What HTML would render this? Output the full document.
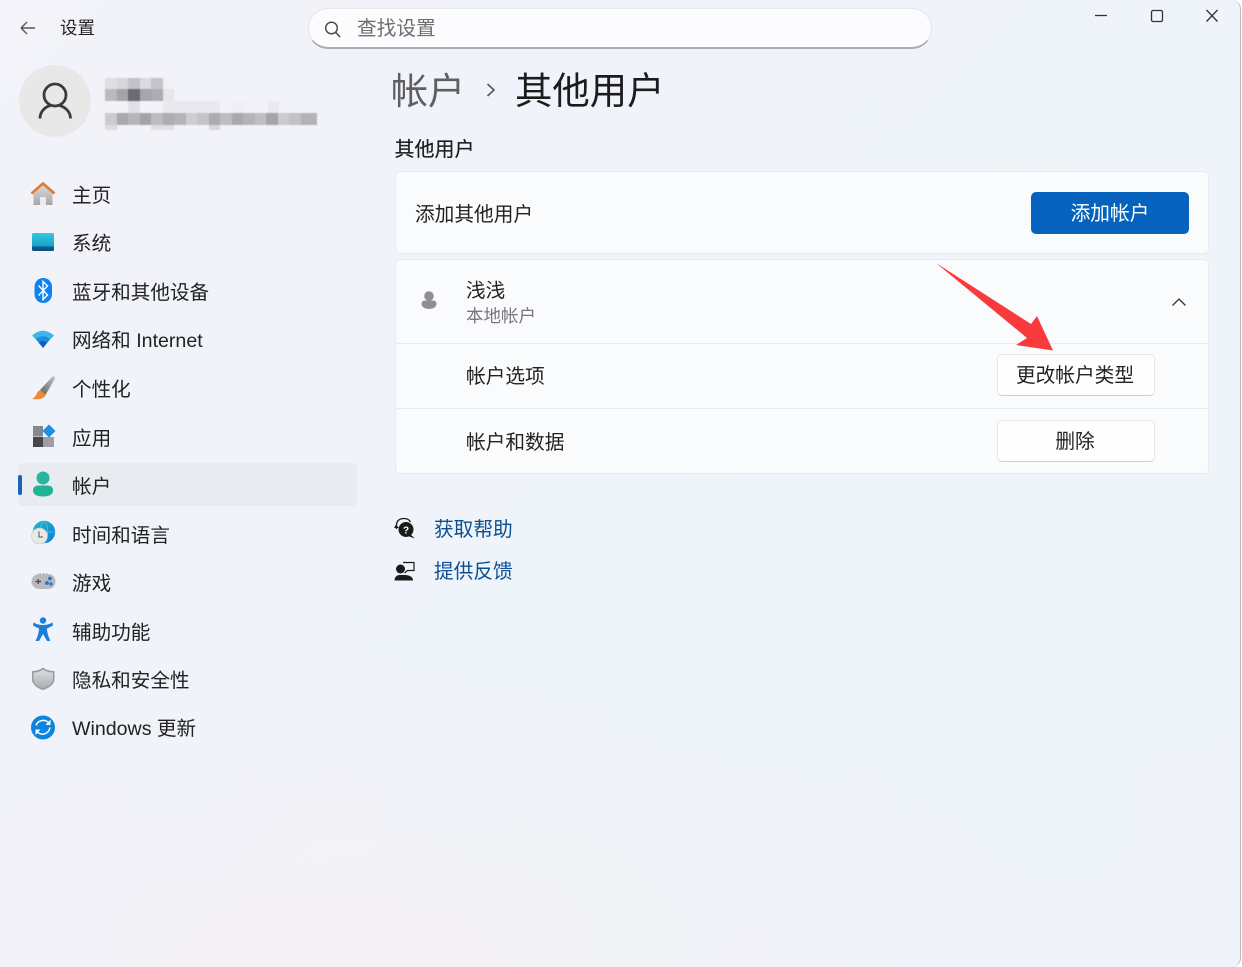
<!DOCTYPE html>
<html lang="zh-CN">
<head>
<meta charset="utf-8">
<title>设置</title>
<style>
html,body{margin:0;padding:0;width:1242px;height:967px;overflow:hidden;background:#fff}
body{font-family:"Liberation Sans","Noto Sans CJK SC",sans-serif;color:#1b1b1b;position:relative}
#win{position:absolute;left:0;top:0;width:1240px;height:967px;border-right:1px solid #b9bbbf;border-radius:0 9px 9px 0;overflow:hidden;
background:radial-gradient(ellipse 700px 300px at 350px 960px,#f5f2f6 0%,rgba(245,242,246,0) 100%),linear-gradient(135deg,#f3f3f9 0%,#f0f3fa 35%,#eef4f9 65%,#f0f3fa 100%)}
.t{position:absolute;white-space:nowrap;line-height:1}
.nav{font-size:19.6px;left:72px;color:#222}
.card{position:absolute;left:395px;width:814px;background:#fafbfd;border:1px solid #e8e9ec;box-sizing:border-box;border-radius:5px}
.sep{position:absolute;left:396px;width:812px;height:1px;background:#ebecef}
.btn{position:absolute;background:#fefefe;border:1px solid #e6e6e8;border-bottom-color:#cfcfd2;box-sizing:border-box;border-radius:5px;width:158px;height:42px;left:997px;padding-right:2px;text-align:center;font-size:19.7px;line-height:42px;color:#222}
svg{position:absolute;overflow:visible}
</style>
</head>
<body>
<div id="win">
  <svg style="left:0;top:0" width="40" height="50"><path d="M21 28H35M21 28L27 22M21 28L27 34" fill="none" stroke="#555" stroke-width="1.4"/></svg>
  <div class="t" style="left:60px;top:20px;font-size:17.5px;color:#222">设置</div>

  <div style="position:absolute;left:308px;top:8px;width:624px;height:41px;box-sizing:border-box;background:#fcfcfe;border:1px solid #e6e7eb;border-bottom:2px solid #a9aaac;border-radius:20px"></div>
  <svg style="left:0;top:0" width="360" height="50"><circle cx="331.500" cy="28" r="5.800" fill="none" stroke="#444" stroke-width="1.400"/><path d="M336 32.500L340 37" stroke="#444" stroke-width="1.500"/></svg>
  <div class="t" style="left:357px;top:20px;font-size:19.700px;color:#6d6d6f">查找设置</div>

  <svg style="left:1080px;top:0" width="160" height="40" fill="none" stroke="#333" stroke-width="1.300">
    <path d="M15 15.500H27"/>
    <rect x="71.500" y="10.500" width="11" height="11" rx="1.500"/>
    <path d="M126.500 10L137.500 21.500M137.500 10L126.500 21.500"/>
  </svg>

  <div style="position:absolute;left:19px;top:65px;width:72px;height:72px;border-radius:50%;background:#e8e8e9"></div>
  <svg style="left:0;top:0" width="100" height="140" fill="none" stroke="#3b3b3d" stroke-width="2.800">
    <circle cx="55" cy="95" r="11"/>
    <path d="M40 118.500C40 111.500 45 107 50.500 105.500M70.500 118.500C70.500 111.500 65 107 59.500 105.500"/>
  </svg>

  <svg style="left:105px;top:78px;filter:blur(.6px)" width="215" height="52" shape-rendering="crispEdges">
    <g>
      <rect x="0" y="0" width="12" height="11" fill="#dedee4"/><rect x="12" y="0" width="11" height="11" fill="#d6d6dc"/><rect x="23" y="0" width="12" height="11" fill="#c1c1c7"/><rect x="35" y="0" width="11" height="11" fill="#d9d9df"/><rect x="46" y="0" width="12" height="11" fill="#c4c4ca"/><rect x="58" y="0" width="11" height="11" fill="#f0f0f5"/>
      <rect x="0" y="11" width="12" height="12" fill="#b9b9be"/><rect x="12" y="11" width="11" height="12" fill="#a4a4aa"/><rect x="23" y="11" width="12" height="12" fill="#6b6b73"/><rect x="35" y="11" width="11" height="12" fill="#a5a5ab"/><rect x="46" y="11" width="12" height="12" fill="#acacb2"/><rect x="58" y="11" width="11" height="12" fill="#e6e6eb"/>
      <rect x="23" y="23" width="12" height="12" fill="#e0e0e6"/><rect x="58" y="23" width="11" height="12" fill="#e9e9ee"/><rect x="69" y="23" width="46" height="12" fill="#e8e8ee"/><rect x="128" y="23" width="11" height="12" fill="#eeeef3"/><rect x="163" y="23" width="11" height="12" fill="#e9e9ee"/>
      <rect x="0" y="35" width="12" height="12" fill="#cacacf"/><rect x="12" y="35" width="11" height="12" fill="#a9a9af"/><rect x="23" y="35" width="12" height="12" fill="#b5b5ba"/><rect x="35" y="35" width="11" height="12" fill="#a3a3a9"/><rect x="46" y="35" width="12" height="12" fill="#bcbcc1"/><rect x="58" y="35" width="11" height="12" fill="#adadb3"/><rect x="69" y="35" width="12" height="12" fill="#b4b4b9"/><rect x="81" y="35" width="11" height="12" fill="#cdcdd2"/><rect x="92" y="35" width="12" height="12" fill="#c3c3c8"/><rect x="104" y="35" width="11" height="12" fill="#abacb1"/><rect x="115" y="35" width="12" height="12" fill="#bdbdc2"/><rect x="127" y="35" width="11" height="12" fill="#a9a9af"/><rect x="138" y="35" width="12" height="12" fill="#b3b3b8"/><rect x="150" y="35" width="11" height="12" fill="#bfbfc4"/><rect x="161" y="35" width="12" height="12" fill="#a4a4aa"/><rect x="173" y="35" width="11" height="12" fill="#cacacf"/><rect x="184" y="35" width="12" height="12" fill="#c1c1c6"/><rect x="196" y="35" width="16" height="12" fill="#b3b3b8"/>
      <rect x="0" y="47" width="12" height="5" fill="#dcdce1"/><rect x="46" y="47" width="23" height="5" fill="#dfdfe4"/><rect x="104" y="47" width="11" height="5" fill="#d5d5da"/>
    </g>
  </svg>

  <div style="position:absolute;left:18px;top:463px;width:339px;height:43px;background:#e8ebf0;border-radius:5px"></div>
  <div style="position:absolute;left:18px;top:475px;width:4px;height:20px;background:#1b62c0;border-radius:2px"></div>

  <!-- nav icons -->
  <svg style="left:0;top:0" width="70" height="750">
    <defs>
      <linearGradient id="sys" x1="0" y1="0" x2="0" y2="1"><stop offset="0" stop-color="#33c8e2"/><stop offset=".75" stop-color="#1b9fc9"/><stop offset=".76" stop-color="#0d5e8e"/><stop offset="1" stop-color="#0b4f7c"/></linearGradient>
      <linearGradient id="house" x1="0" y1="0" x2="0" y2="1"><stop offset="0" stop-color="#dcdcdc"/><stop offset="1" stop-color="#a6a6a6"/></linearGradient>
      <linearGradient id="globe" x1="0" y1="0" x2="1" y2="1"><stop offset="0" stop-color="#27b5c8"/><stop offset="1" stop-color="#0f7fd8"/></linearGradient>
      <linearGradient id="shield" x1="0" y1="0" x2="0" y2="1"><stop offset="0" stop-color="#dcdde0"/><stop offset="1" stop-color="#a9abae"/></linearGradient>
      <linearGradient id="brush" x1="1" y1="0" x2="0" y2="1"><stop offset="0" stop-color="#c4c4c4"/><stop offset="1" stop-color="#5f5f5f"/></linearGradient>
    </defs>
    <!-- home -->
    <path d="M33.500 193L43 184.500L52.500 193V205H33.500Z" fill="url(#house)"/>
    <rect x="40" y="197" width="6" height="8" fill="#e9ebf0"/>
    <path d="M31.500 193.500L43 183.500L54.500 193.500" fill="none" stroke="#e07b33" stroke-width="2.800" stroke-linejoin="round"/>
    <!-- system -->
    <rect x="32" y="233" width="22" height="18" rx="1.500" fill="url(#sys)"/>
    <!-- bluetooth -->
    <rect x="34.500" y="278" width="17.500" height="25" rx="8.700" fill="#0b84ef"/>
    <path d="M38.500 285.500L47.500 295L43 299.500V281.500L47.500 286L38.500 295.500" fill="none" stroke="#fff" stroke-width="1.400"/>
    <!-- wifi -->
    <path d="M32 335.500Q43 326 54 335.500L50.500 339Q43 333 35.500 339Z" fill="#3ab7ea"/>
    <path d="M35.500 339Q43 333 50.500 339L47.500 342.500Q43 339 38.500 342.500Z" fill="#1a8fe0"/>
    <path d="M38.500 342.500Q43 339 47.500 342.500L43 348Z" fill="#0a5fbd"/>
    <!-- brush -->
    <path d="M40 390L52 377C54.500 375.500 55.500 377 54.500 379.500L45.500 395Z" fill="url(#brush)"/>
    <path d="M40 390L45.500 395C44 399 38 400 32 399C36 397.500 36.500 392 40 390Z" fill="#ee8a2f"/>
    <!-- apps -->
    <rect x="33" y="426" width="10" height="10.500" fill="#85878b"/>
    <rect x="33" y="437" width="10.500" height="10" fill="#45474b"/>
    <rect x="44" y="437" width="10" height="10" fill="#9c9ea2"/>
    <path d="M49 424.500L55.500 431L49 437.500L42.500 431Z" fill="#1a8fe6"/>
    <!-- accounts -->
    <circle cx="43" cy="478" r="6.500" fill="#2bb5a0"/>
    <path d="M33 490.500C33 486.500 36 485.500 39 485.500H47C50 485.500 53 486.500 53 490.500C53 495 48 496.500 43 496.500C38 496.500 33 495 33 490.500Z" fill="#23b196"/>
    <!-- time -->
    <circle cx="44" cy="532" r="11.200" fill="url(#globe)"/>
    <path d="M44 521C39 525 39 539 44 543M44 521C49 525 49 539 44 543M33 532H55" fill="none" stroke="#7fd0f0" stroke-width=".5"/>
    <circle cx="39.500" cy="536" r="8" fill="#e8e8e6" stroke="#c4c4c4" stroke-width=".6"/>
    <path d="M39 531.500V537H43" fill="none" stroke="#555" stroke-width="1"/>
    <!-- game -->
    <rect x="31.500" y="574" width="24" height="15" rx="7.500" fill="#b6b9be"/>
    <path d="M35.500 581.500H41M38.200 579V584" stroke="#444" stroke-width="1.200"/>
    <path d="M39.500 573.500h1M43 573.500h1M46.500 573.500h1" stroke="#999" stroke-width="1"/>
    <circle cx="50" cy="578.500" r="1.900" fill="#2a6fc9"/><circle cx="47" cy="583" r="1.900" fill="#2a6fc9"/><circle cx="51" cy="584" r="1.600" fill="#2a6fc9"/>
    <!-- a11y -->
    <circle cx="43" cy="620.500" r="3.200" fill="#1b7fd9"/>
    <path d="M33.500 622.500C37 624.500 40 625 43 625C46 625 49 624.500 52.500 622.500L53 625.500C50.500 627 48 628 47 628.500C47 633 49 638 50.500 641H47L43 634L39 641H35.500C37 638 39 633 39 628.500C38 628 35.500 627 33 625.500Z" fill="#1b7fd9"/>
    <!-- shield -->
    <path d="M43 667.500C47 670.500 50.500 671 54.500 671V679C54.500 685 48 688.500 43 690C38 688.500 32 685 32 679V671C35.500 671 39 670.500 43 667.500Z" fill="#989a9e"/>
    <path d="M43 669.500C47 672 50 672.500 53 672.500V679C53 684 48 687 43 688.500C38 687 33.500 684 33.500 679V672.500C36.500 672.500 39.500 672 43 669.500Z" fill="url(#shield)"/>
    <!-- update -->
    <circle cx="43" cy="727.500" r="12" fill="#0e84de"/>
    <path d="M36 725.500A7.500 7.500 0 0 1 49.500 724M50 727.500A7.500 7.500 0 0 1 36.500 731" fill="none" stroke="#fff" stroke-width="1.500"/>
    <path d="M50.500 719.500V725H45.500ZM35.500 735V729.500H40.500Z" fill="#fff"/>
  </svg>

  <div class="t nav" style="top:187px">主页</div>
  <div class="t nav" style="top:235px">系统</div>
  <div class="t nav" style="top:284px">蓝牙和其他设备</div>
  <div class="t nav" style="top:332px">网络和 Internet</div>
  <div class="t nav" style="top:381px">个性化</div>
  <div class="t nav" style="top:430px">应用</div>
  <div class="t nav" style="top:478px">帐户</div>
  <div class="t nav" style="top:527px">时间和语言</div>
  <div class="t nav" style="top:575px">游戏</div>
  <div class="t nav" style="top:624px">辅助功能</div>
  <div class="t nav" style="top:672px">隐私和安全性</div>
  <div class="t nav" style="top:720px">Windows 更新</div>

  <div class="t" style="left:391px;top:73px;font-size:37px;color:#5f5f62">帐户</div>
  <svg style="left:0;top:0" width="500" height="110"><path d="M487.500 84L494 90L487.500 96" fill="none" stroke="#555" stroke-width="1.600"/></svg>
  <div class="t" style="left:515px;top:73px;font-size:37.400px;color:#1c1c1c">其他用户</div>
  <div class="t" style="left:394.500px;top:140px;font-size:20px;color:#1c1c1c;-webkit-text-stroke:.2px #1c1c1c">其他用户</div>

  <div class="card" style="top:171px;height:83px"></div>
  <div class="t" style="left:415px;top:206px;font-size:19.700px;color:#222">添加其他用户</div>
  <div style="position:absolute;left:1031px;top:192px;width:158px;height:42px;background:#0563bd;border-radius:5px;color:#fff;text-align:center;font-size:19.700px;line-height:44px">添加帐户</div>

  <div class="card" style="top:259px;height:215px"></div>
  <div class="sep" style="top:343px"></div>
  <div class="sep" style="top:408px"></div>
  <svg style="left:0;top:0" width="1240" height="320">
    <circle cx="429" cy="296" r="4.800" fill="#8f8f92"/>
    <path d="M421.500 304C421.500 301.500 423 300.500 425 300.500H433C435 300.500 436.500 301.500 436.500 304C436.500 307 433 309 429 309C425 309 421.500 307 421.500 304Z" fill="#8f8f92"/>
    <path d="M1172.500 305.500L1179 299L1185.500 305.500" fill="none" stroke="#333" stroke-width="1.300"/>
  </svg>
  <div class="t" style="left:466px;top:282px;font-size:19.600px;color:#222">浅浅</div>
  <div class="t" style="left:466px;top:308px;font-size:17.500px;color:#77777a">本地帐户</div>
  <div class="t" style="left:466px;top:368px;font-size:19.700px;color:#222">帐户选项</div>
  <div class="t" style="left:466px;top:434px;font-size:19.700px;color:#222">帐户和数据</div>
  <div class="btn" style="top:354px">更改帐户类型</div>
  <div class="btn" style="top:420px">删除</div>

  <svg style="left:0;top:0" width="1240" height="360"><path d="M936 263L1031 324L1037 316L1053 350.500L1016 345L1027 338Z" fill="#f93a3d"/></svg>

  <svg style="left:0;top:0" width="430" height="600">
    <circle cx="406" cy="529.500" r="7.500" fill="#1b1b1b"/>
    <path d="M410 534L415 538.500L409 536.500Z" fill="#1b1b1b"/>
    <path d="M396.500 529V525C396.500 520.500 400 518.500 404 518.500C407 518.500 409.500 520 410.500 522" fill="none" stroke="#1b1b1b" stroke-width="1.300"/>
    <path d="M396 524.500L394 528H399Z" fill="#1b1b1b"/>
    <text x="406" y="533.500" font-size="10" font-weight="700" fill="#fff" text-anchor="middle" font-family="Liberation Sans">?</text>
    <circle cx="400.500" cy="569" r="4.500" fill="#1b1b1b"/>
    <path d="M394.500 580.500C394.500 577 397 575 399.500 575H404C408 575 413 576 413 580.500Z" fill="#1b1b1b"/>
    <path d="M403 562.500H414V570.500H407.500L404.500 573" fill="none" stroke="#1b1b1b" stroke-width="1.200"/>
  </svg>
  <div class="t" style="left:434px;top:521px;font-size:19.700px;color:#0b4f92">获取帮助</div>
  <div class="t" style="left:434px;top:563px;font-size:19.700px;color:#0b4f92">提供反馈</div>
</div>
</body>
</html>
